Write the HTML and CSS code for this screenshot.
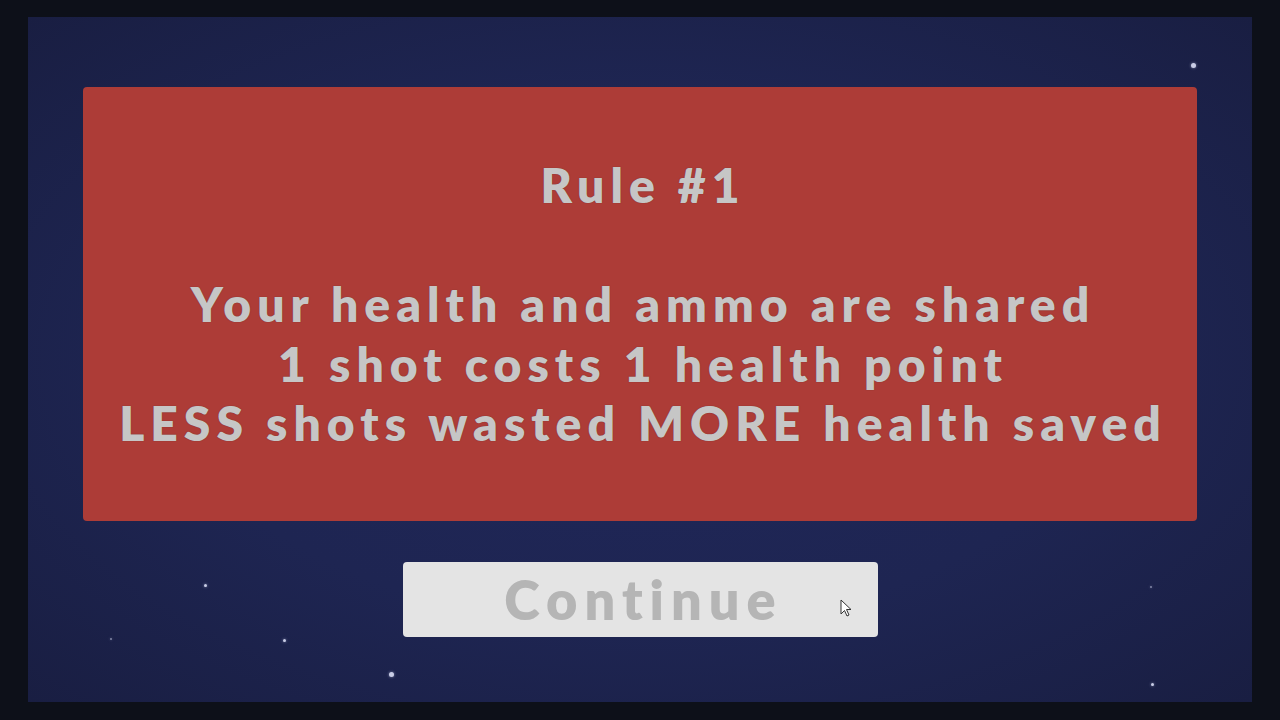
FILE: index.html
```html
<!DOCTYPE html>
<html lang="en">
<head>
    <meta charset="UTF-8">
    <meta name="viewport" content="width=device-width, initial-scale=1.0">
    <title>Rule #1</title>
    <link rel="stylesheet" href="styles.css">
</head>
<body>

<div class="screen">
    <!-- background stars -->
    <span class="star big" style="left: 1163px; top: 46px;"></span>
    <span class="star" style="left: 176px; top: 567px;"></span>
    <span class="star" style="left: 255px; top: 622px;"></span>
    <span class="star faint" style="left: 82px; top: 621px;"></span>
    <span class="star big" style="left: 361px; top: 655px;"></span>
    <span class="star" style="left: 1123px; top: 666px;"></span>
    <span class="star faint" style="left: 1122px; top: 569px;"></span>

    <div class="rule-panel">
        <p>Rule #1</p>
        <p>&nbsp;</p>
        <p>Your health and ammo are shared</p>
        <p>1 shot costs 1 health point</p>
        <p>LESS shots wasted MORE health saved</p>
    </div>

    <button class="continue-btn" type="button">
        Continue
        <svg class="cursor" width="14" height="20" viewBox="0 0 14 20">
            <path d="M1 1 L1 15 L4.5 11.5 L7 17 L9 16 L6.5 10.5 L11 10.5 Z" fill="#fff" stroke="#333" stroke-width="1" stroke-linejoin="round"/>
        </svg>
    </button>
</div>

</body>
</html>
```

FILE: styles.css
```css
* {
    box-sizing: border-box;
}
body {
    margin: 0;
    width: 1280px;
    height: 720px;
    background: #0d1019;
    overflow: hidden;
    font-family: Lato, "DejaVu Sans", sans-serif;
}
.screen {
    position: relative;
    margin: 17px 28px 0;
    width: 1224px;
    height: 685px;
    background: radial-gradient(ellipse at center, #20275a 0%, #1e2552 55%, #191e42 100%);
    display: flex;
    flex-direction: column;
    align-items: center;
    padding-top: 70px;
}
.star {
    position: absolute;
    width: 3px;
    height: 3px;
    border-radius: 50%;
    background: #c9cde6;
    box-shadow: 0 0 3px rgba(200, 205, 240, 0.6);
}
.star.big {
    width: 5px;
    height: 5px;
}
.star.faint {
    width: 2px;
    height: 2px;
    opacity: 0.6;
}
.rule-panel {
    width: 1114px;
    height: 434px;
    background: #ad3c37;
    border-radius: 4px;
    padding-top: 68px;
    padding-left: 6px;
    text-align: center;
    color: #c6c6c6;
    font-size: 48px;
    font-weight: 800;
    letter-spacing: 6px;
    line-height: 59.5px;
    text-shadow: 0 0 1px #6b2a27;
}
.rule-panel p {
    margin: 0;
}
.continue-btn {
    position: relative;
    margin-top: 41px;
    width: 475px;
    height: 75px;
    background: #e4e4e4;
    border: none;
    border-radius: 4px;
    color: #b5b5b5;
    font-family: Lato, "DejaVu Sans", sans-serif;
    font-size: 54px;
    font-weight: 800;
    letter-spacing: 7px;
    padding: 0 0 0 7px;
}
.cursor {
    position: absolute;
    left: 437px;
    top: 37px;
}
```
